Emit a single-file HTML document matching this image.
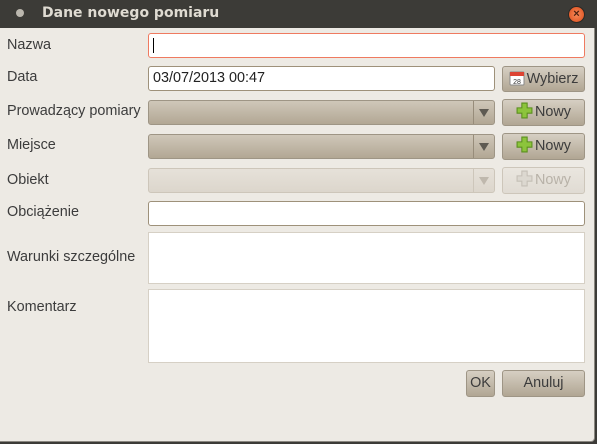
<!DOCTYPE html>
<html><head><style>
*{box-sizing:border-box}
body{margin:0;width:597px;height:444px;background:#3c3b37;font-family:"Liberation Sans","DejaVu Sans",sans-serif;font-size:14px;color:#3c3c3c;position:relative;overflow:hidden}
.win{position:absolute;left:0;top:28px;width:595px;height:414px;background:#edeae4;border-right:1px solid #8a8780;border-bottom:1px solid #8a8780;border-bottom-right-radius:4px}
.t{position:absolute;left:42px;top:5px;color:#dfdbd2;font-weight:bold;font-size:14px;font-family:"DejaVu Sans",sans-serif}
.a{position:absolute}
.lbl{position:absolute;left:7px;font-size:14.4px;color:#3c3c3c}
.in{position:absolute;background:#fff;border:1px solid #a8a090;border-radius:3px}
.cb{position:absolute;border:1px solid #9e9585;border-radius:3px;background:linear-gradient(#cfc7b9,#b2a794)}
.cb .sep{position:absolute;right:20px;top:0;bottom:0;border-left:1px solid #978c7a}
.cb .ar{position:absolute;right:5px;top:8px;width:0;height:0;border-left:5px solid transparent;border-right:5px solid transparent;border-top:8px solid #5e5a52}
.bt{position:absolute;border:1px solid #9e9585;border-radius:3px;background:linear-gradient(#d6cfc3,#b1a693);text-align:center;line-height:24px;color:#3c3c3c;font-size:14.4px}
.dis{background:linear-gradient(#eae6df,#e0dbd3);border-color:#cdc6ba;color:#b8b2a8}
.plus{display:inline-block;vertical-align:-3px;margin-right:2px}
</style></head><body>
<div class="a" style="left:16px;top:9px;width:8px;height:8px;border-radius:50%;background:#bbb7ae"></div>
<div class="t">Dane nowego pomiaru</div>
<div class="a" style="left:568px;top:6px;width:17px;height:17px;border-radius:50%;background:radial-gradient(#f58a5a,#dd4c1a);border:1px solid #2a2925;color:#4a2010;font-size:11px;text-align:center;line-height:15px;font-weight:bold">×</div>
<div class="win"></div>
<div class="lbl" style="top:37px">Nazwa</div>
<div class="lbl" style="top:69px">Data</div>
<div class="lbl" style="top:103px">Prowadzący pomiary</div>
<div class="lbl" style="top:137px">Miejsce</div>
<div class="lbl" style="top:172px">Obiekt</div>
<div class="lbl" style="top:204px">Obciążenie</div>
<div class="lbl" style="top:249px">Warunki szczególne</div>
<div class="lbl" style="top:299px">Komentarz</div>

<div class="in" style="left:148px;top:33px;width:437px;height:25px;border-color:#ef7a60"><div style="position:absolute;left:4px;top:4px;width:1px;height:15px;background:#000"></div></div>
<div class="in" style="left:148px;top:66px;width:347px;height:25px;border-color:#9e917a;padding:3px 0 0 4px;color:#222;font-size:14.4px">03/07/2013 00:47</div>
<div class="bt" style="left:502px;top:66px;width:83px;height:26px"><svg class="plus" width="16" height="16" viewBox="0 0 16 16"><rect x="1" y="2" width="14" height="13" rx="1" fill="#fff" stroke="#888"/><rect x="1" y="2" width="14" height="4" fill="#d43"/><text x="8" y="14" font-size="7" text-anchor="middle" fill="#333" font-family="Liberation Sans">28</text></svg>Wybierz</div>

<div class="cb" style="left:148px;top:100px;width:347px;height:25px"><div class="sep"></div><div class="ar"></div></div>
<div class="bt" style="left:502px;top:99px;width:83px;height:27px"><svg class="plus" width="17" height="17" viewBox="0 0 16 16"><path d="M5.5 1h5v4.5H15v5h-4.5V15h-5v-4.5H1v-5h4.5z" fill="#8cc43c" stroke="#5a8e1e"/></svg>Nowy</div>
<div class="cb" style="left:148px;top:134px;width:347px;height:25px"><div class="sep"></div><div class="ar"></div></div>
<div class="bt" style="left:502px;top:133px;width:83px;height:27px"><svg class="plus" width="17" height="17" viewBox="0 0 16 16"><path d="M5.5 1h5v4.5H15v5h-4.5V15h-5v-4.5H1v-5h4.5z" fill="#8cc43c" stroke="#5a8e1e"/></svg>Nowy</div>
<div class="cb" style="left:148px;top:168px;width:347px;height:25px;background:linear-gradient(#e6e1d9,#dcd6cc);border-color:#cdc6ba"><div class="sep" style="border-color:#cdc6ba"></div><div class="ar" style="border-top-color:#bfb8ad"></div></div>
<div class="bt dis" style="left:502px;top:167px;width:83px;height:27px"><svg class="plus" width="17" height="17" viewBox="0 0 16 16"><path d="M5.5 1h5v4.5H15v5h-4.5V15h-5v-4.5H1v-5h4.5z" fill="#dcd8d0" stroke="#c4bfb6"/></svg>Nowy</div>

<div class="in" style="left:148px;top:201px;width:437px;height:25px;border-color:#9e917a"></div>
<div class="in" style="left:148px;top:232px;width:437px;height:52px;border-color:#d6d0c5;border-radius:0"></div>
<div class="in" style="left:148px;top:289px;width:437px;height:74px;border-color:#d6d0c5;border-radius:0"></div>

<div class="bt" style="left:466px;top:370px;width:29px;height:27px">OK</div>
<div class="bt" style="left:502px;top:370px;width:83px;height:27px">Anuluj</div>
</body></html>
